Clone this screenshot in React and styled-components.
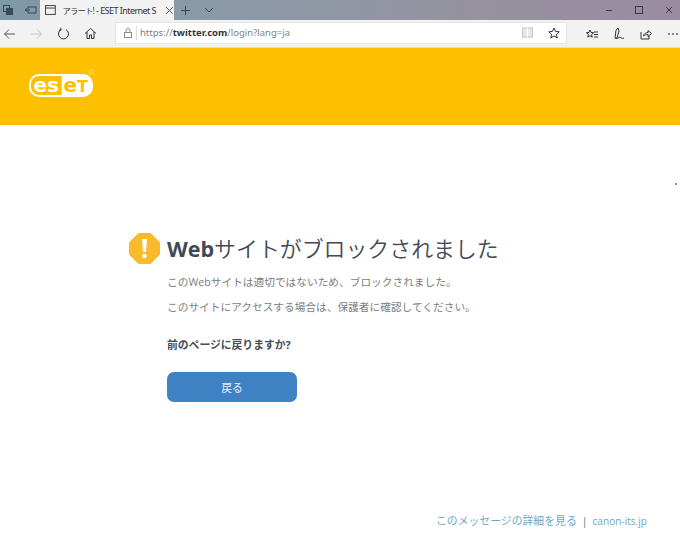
import React from "react";
import styled, { createGlobalStyle } from "styled-components";

const Global = createGlobalStyle`
  html, body { margin: 0; padding: 0; background: #fff; }
  body { font-family: "Open Sans", "Noto Sans CJK JP", sans-serif; }
`;
const Page = styled.div`
  width: 680px; height: 533px; display: flex; flex-direction: column; overflow: hidden; position: relative; background: #fff;
`;
const TitleBar = styled.div`
  height: 20px; display: flex; align-items: stretch;
  background: linear-gradient(90deg, #7f98a8 0%, #8a9aa8 30%, #96929f 70%, #9a8ca0 100%);
`;
const LeftTools = styled.div`
  width: 40px; display: flex; align-items: center; padding-left: 2px; gap: 10px; box-sizing: border-box;
`;
const Tab = styled.div`
  width: 134px; background: #f2f2f2; display: flex; align-items: center; padding-left: 5px; box-sizing: border-box; gap: 6px;
`;
const TabTitle = styled.span`
  width: 98px; white-space: nowrap; font-size: 9px; letter-spacing: -0.55px; color: #333;
  font-family: "Noto Sans", "Noto Sans CJK JP", sans-serif;
`;
const TabKana = styled.span`font-size: 8px;`;
const TabActions = styled.div`
  display: flex; align-items: center; gap: 13px; padding-left: 6px; color: #444;
`;
const Spacer = styled.div`flex: 1;`;
const WindowButtons = styled.div`
  display: flex; align-items: center; gap: 20px; padding-right: 6px;
`;
const Toolbar = styled.div`
  height: 28px; background: #f2f2f2; display: flex; align-items: center; border-bottom: 1px solid #ecdcb8; box-sizing: border-box;
`;
const NavButtons = styled.div`
  width: 115px; padding-left: 3px; box-sizing: border-box; display: flex; align-items: center; gap: 14px; flex-shrink: 0;
`;
const AddressBar = styled.div`
  width: 452px; height: 22px; margin-top: -2px; background: #fff; border: 1px solid #e6e6e6; box-sizing: border-box;
  display: flex; align-items: center; padding: 0 6px 0 7px; flex-shrink: 0;
`;
const Divider = styled.div`width: 1px; height: 14px; background: #ddd; margin: 0 3px 0 3px;`;
const Url = styled.span`
  flex: 1; font-size: 9.5px; color: #7f7f7f; font-family: "Noto Sans", sans-serif; white-space: nowrap;
  b { color: #333; font-weight: 700; }
`;
const AddressIcons = styled.div`display: flex; align-items: center; gap: 15px; padding-right: 0;`;
const RightTools = styled.div`
  flex: 1; display: flex; align-items: center; justify-content: space-between; padding: 0 1px 0 19px;
`;
const Banner = styled.header`
  height: 77px; background: #fcc000; display: flex; align-items: flex-start; padding: 20px 0 0 28px; box-sizing: border-box;
`;
const Main = styled.main`
  flex: 1; display: flex; flex-direction: column; padding: 107px 0 0 129px; box-sizing: border-box; position: relative;
`;
const Heading = styled.div`display: flex; align-items: center; gap: 7px;`;
const Title = styled.h1`
  margin: 0; font-size: 21.9px; line-height: 31px; font-weight: 350; color: #3f4a55; white-space: nowrap;
  font-family: "Noto Sans CJK JP", sans-serif;
  b { font-family: "Open Sans", sans-serif; font-weight: 700; font-size: 21.5px; }
`;
const Body = styled.div`padding-left: 38px; display: flex; flex-direction: column; align-items: flex-start;`;
const Para = styled.p`
  margin: ${p => p.$top}px 0 0; font-size: 10.7px; line-height: 16px; color: #7d7d7d; white-space: nowrap;
`;
const Question = styled.p`
  margin: 22px 0 0; font-size: 10.8px; line-height: 16px; font-weight: 700; color: #454d55; white-space: nowrap;
`;
const BackButton = styled.button`
  margin-top: 19px; width: 130px; height: 30px; border: none; border-radius: 7px; background: #3f82c4; color: #e8f1f8;
  font-family: "Noto Sans CJK JP", sans-serif; font-size: 10.8px; padding: 0;
`;
const Footer = styled.footer`
  position: absolute; right: 33px; bottom: 4px; display: flex; align-items: center; gap: 5px; line-height: 16px; color: #6fa8c2;
`;
const FooterLink = styled.span`color: #6fa8c2; font-size: ${p => p.$size}px;`;
const Sep = styled.span`color: #5f7480; font-size: 10.5px;`;
const Speck = styled.span`
  position: absolute; left: 675px; top: 183px; width: 2px; height: 2px; border-radius: 50%; background: #d0404a;
`;

const Ico = ({ w = 14, h = 14, sw = 1, c = "#444", children, fill = "none" }) => (
  <svg width={w} height={h} viewBox={`0 0 ${w} ${h}`} fill={fill} stroke={c} strokeWidth={sw}>{children}</svg>
);

const Logo = () => (
  <svg width="66" height="30" viewBox="0 0 66 30">
    <rect x="2" y="7" width="62" height="21" rx="9" fill="none" stroke="#fff" strokeWidth="2" />
    <path d="M33.700 7H55a9 9 0 0 1 9 9V19a9 9 0 0 1-9 9H33.700Z" fill="#fff" />
    <text x="5.500" y="24" fontFamily="'DejaVu Sans', sans-serif" fontWeight="700" fontSize="20" fill="#fff">es</text>
    <text x="35.500" y="24" fontFamily="'DejaVu Sans', sans-serif" fontWeight="700" fontSize="20" fill="#fcc000">e<tspan fontSize="16">T</tspan></text>
    <circle cx="63.500" cy="4" r="2" fill="none" stroke="#fde49a" strokeWidth="0.8" />
  </svg>
);

export default function App() {
  return (
    <Page>
      <Global />
      <TitleBar>
        <LeftTools>
          <Ico w={12} h={12} c="#3a4a55">
            <rect x="1.500" y="1.500" width="6" height="6" />
            <rect x="4.500" y="4.500" width="6" height="6" fill="#3a4a55" />
          </Ico>
          <Ico w={13} h={12} c="#3a4a55">
            <rect x="4" y="3" width="8" height="6" />
            <path d="M1 6h5M3 4.500 1 6l2 1.500" />
          </Ico>
        </LeftTools>
        <Tab>
          <Ico w={12} h={12}>
            <rect x="0.500" y="1.500" width="10" height="9" />
            <path d="M0.500 4h10" />
          </Ico>
          <TabTitle><TabKana>アラート!</TabKana> - ESET Internet S</TabTitle>
          <Ico w={9} h={9} sw={0.9}><path d="M1 1l7 7M8 1l-7 7" /></Ico>
        </Tab>
        <TabActions>
          <Ico w={11} h={11} c="#3d4650"><path d="M5.500 1v9M1 5.500h9" /></Ico>
          <Ico w={10} h={8} c="#3d4650"><path d="M1 2l4 4 4-4" /></Ico>
        </TabActions>
        <Spacer />
        <WindowButtons>
          <Ico w={10} h={10} c="#3a3a48"><path d="M2 5.500h6" /></Ico>
          <Ico w={10} h={10} c="#3a3a48"><rect x="1.500" y="1.500" width="7" height="7" /></Ico>
          <Ico w={10} h={10} c="#3a3a48"><path d="M2 2l6 6M8 2l-6 6" /></Ico>
        </WindowButtons>
      </TitleBar>
      <Toolbar>
        <NavButtons>
          <Ico w={13} h={12} c="#555"><path d="M12 6H1.500M6 1.500 1.500 6 6 10.500" /></Ico>
          <Ico w={13} h={12} c="#c4c4c4"><path d="M1 6h10.500M7 1.500 11.500 6 7 10.500" /></Ico>
          <Ico w={13} h={13} c="#333"><path d="M4 2.600a5 5 0 1 0 5 0M3.600 0.800 4.200 3 1.900 3.300" /></Ico>
          <Ico w={13} h={13} c="#333"><path d="M1 6.500 6.500 1.500 12 6.500M3 5v6.500h2.500V8h2v3.500H10V5" /></Ico>
        </NavButtons>
        <AddressBar>
          <Ico w={10} h={12} c="#8a8a8a">
            <rect x="1.500" y="5.500" width="7" height="5" />
            <path d="M3 5.500V3.500a2 2 0 0 1 4 0v2" />
          </Ico>
          <Divider />
          <Url>https://<b>twitter.com</b>/login?lang=ja</Url>
          <AddressIcons>
            <Ico w={11} h={11} c="#c9c9c9" sw={1.200}>
              <rect x="0.500" y="1" width="10" height="9" fill="#e8e8e8" />
              <path d="M5.500 1v9" stroke="#fff" />
            </Ico>
            <Ico w={12} h={12} c="#333"><path d="M6 1l1.500 3.400 3.700.4-2.800 2.500.8 3.600L6 9l-3.200 1.900.8-3.600L.8 4.800l3.700-.4Z" /></Ico>
          </AddressIcons>
        </AddressBar>
        <RightTools>
          <Ico w={12} h={12} c="#333"><path d="M4 2l1 2.400 2.600.3-2 1.800.6 2.600L4 7.800 1.800 9.100l.6-2.600-2-1.800 2.600-.3ZM8 4h4M8 6.500h4M8 9h4" /></Ico>
          <Ico w={12} h={13} c="#333"><path d="M2 11 3 3.500 5 1l1 3-2 7ZM2.500 11.500C5 12 6 9.500 7.500 10.500S9.500 11.500 11 11" /></Ico>
          <Ico w={12} h={12} c="#333"><path d="M1 4v7h8V8M3.500 8c.5-2.500 2.500-3.500 4.500-3.500V2.500L11.500 5.500 8 8.500V6.500C6 6.500 4.500 7 3.500 8Z" /></Ico>
          <Ico w={12} h={4} c="#555" sw={0}>
            <circle cx="2" cy="2" r="0.900" fill="#555" />
            <circle cx="6" cy="2" r="0.900" fill="#555" />
            <circle cx="10" cy="2" r="0.900" fill="#555" />
          </Ico>
        </RightTools>
      </Toolbar>
      <Banner><Logo /></Banner>
      <Main>
        <Heading>
          <svg width="31" height="31" viewBox="0 0 31 31">
            <path d="M9.500 0.500H21.500L30.500 9.500V21.500L21.500 30.500H9.500L0.500 21.500V9.500Z" fill="#fbb92c" stroke="#fbb92c" strokeLinejoin="round" />
            <path d="M13 6h5l-1 13h-3Z" fill="#fff" />
            <circle cx="15.500" cy="23" r="2.300" fill="#fff" />
          </svg>
          <Title><b>Web</b>サイトがブロックされました</Title>
        </Heading>
        <Body>
          <Para $top={10}>このWebサイトは適切ではないため、ブロックされました。</Para>
          <Para $top={9}>このサイトにアクセスする場合は、保護者に確認してください。</Para>
          <Question>前のページに戻りますか?</Question>
          <BackButton>戻る</BackButton>
        </Body>
        <Footer>
          <FooterLink $size={10.850}>このメッセージの詳細を見る</FooterLink>
          <Sep>|</Sep>
          <FooterLink $size={10.100}>canon-its.jp</FooterLink>
        </Footer>
      </Main>
      <Speck />
    </Page>
  );
}
